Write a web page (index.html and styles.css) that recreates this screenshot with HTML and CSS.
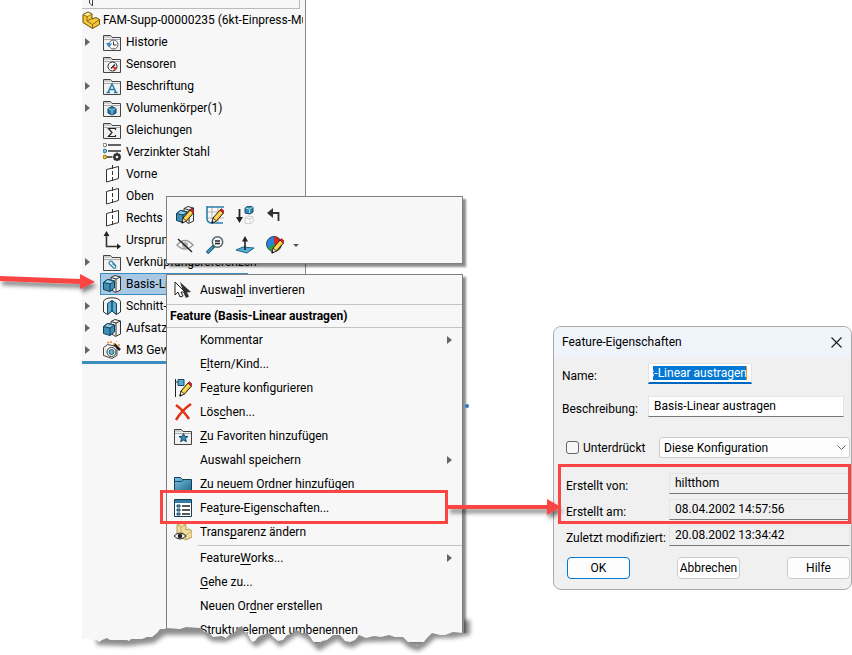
FILE: index.html
```
<!DOCTYPE html>
<html lang="de">
<head>
  <meta charset="utf-8">
  <title>Feature-Eigenschaften</title>
  <link rel="stylesheet" href="styles.css">
</head>
<body>
  <!-- shared icon shapes -->
  <svg class="defs" aria-hidden="true">
    <defs>
      <linearGradient id="blue" x1="0" y1="0" x2="1" y2="1">
        <stop offset="0" stop-color="#7cc4e4"/><stop offset="1" stop-color="#1f6487"/>
      </linearGradient>
      <symbol id="folder" viewBox="0 0 18 18">
        <path d="M.5 17.500V2.500h7l1.500 2h8.500v13z" fill="#f1f1f1" stroke="#444"/>
        <path d="M1 3h6l1.500 2H1z" fill="#ccc"/><path d="M1 6.500h16" stroke="#aaa"/>
      </symbol>
      <symbol id="pencil" viewBox="0 0 18 18">
        <path d="M6 17l1-5 7-8 3.500 3-7 8z" fill="#fbc52e" stroke="#222"/>
        <path d="M9 13l6-7" stroke="#fff0a0"/>
        <path d="M14 4l1.500-1.500 3 3L17 7z" fill="#d9202b" stroke="#8a1016" stroke-width=".6"/>
        <path d="M6 17l1-5 3.500 3z" fill="#f5dcb8" stroke="#222" stroke-width=".7"/><path d="M5.500 17.500l.5-2.500 2 1.500z" fill="#111"/>
      </symbol>
      <symbol id="plane" viewBox="0 0 18 18">
        <path d="M3.500 4.500L15.500 1.500v12L3.500 17z" fill="#fff" stroke="#333"/>
        <path d="M9.500 0v18" stroke="#333" stroke-dasharray="4 2"/>
      </symbol>
      <symbol id="extrude" viewBox="0 0 18 18">
        <path d="M8 2.500L12 .5l5.500 1.500v13l-5 2.500-4.500-3z" fill="#f3f3f3" stroke="#333"/>
        <path d="M8 2.500l5 1.500v13M13 4l4.500-2" fill="none" stroke="#333"/>
        <path d="M.5 7.500l4-3 7 1.500v7l-4.500 3.500-6.500-2z" fill="#3f8fb5" stroke="#123f58"/>
        <path d="M.5 7.500l4-3 7 1.500L7 9z" fill="#8ccbe6" stroke="#123f58"/><path d="M7 9v7.500" stroke="#123f58"/>
      </symbol>
    </defs>
  </svg>

  <main class="stage">
    <section class="tree-panel" aria-label="FeatureManager">
      <div class="filter-bar">
        <svg width="8" height="8" viewBox="0 0 8 8"><path d="M1.500 0v3l3 3V0" fill="#fff" stroke="#444"/></svg>
      </div>
      <div class="tree-root">
        <svg class="icon" viewBox="0 0 18 18"><path d="M1 3.500L6 1l4 2v5l4-1.500 3.500 2v5l-7 4L1 11.500z" fill="#f5c93b" stroke="#6b4d08"/><path d="M1 3.500l4 2L10 3M5 5.500V10l5.500 3.500v4M10.500 13.500l7-5M5 10l5-2.500" fill="none" stroke="#8a6610"/><path d="M2 3.500L6 1.700l3 1.500L5.500 5z" fill="#fff0a0"/></svg>
        <span>FAM-Supp-00000235 (6kt-Einpress-Mutter)</span>
      </div>
      <ul class="tree">
        <li class="branch"><svg class="icon" viewBox="0 0 18 18"><use href="#folder"/><circle cx="10.500" cy="11.500" r="4.500" fill="#fff" stroke="#555"/><path d="M10.500 8.500V12h3" fill="none" stroke="#333"/><path d="M3.500 10l2.500 4 2.500-3.500" fill="#318abd" stroke="#318abd"/></svg><span>Historie</span></li>
        <li><svg class="icon" viewBox="0 0 18 18"><use href="#folder"/><circle cx="9.500" cy="11.500" r="4.500" fill="#fff" stroke="#222"/><path d="M10 11.500l4 1-3 3.500z" fill="#e8331d"/><path d="M8 13.500l4-4" stroke="#222" stroke-width="1.500"/></svg><span>Sensoren</span></li>
        <li class="branch"><svg class="icon" viewBox="0 0 18 18"><use href="#folder"/><path d="M5 15.500L9 7l4 8.500M6.500 12.500h5M3.500 15.500H7M11 15.500h3.500" fill="none" stroke="#287da6" stroke-width="1.500"/></svg><span>Beschriftung</span></li>
        <li class="branch"><svg class="icon" viewBox="0 0 18 18"><use href="#folder"/><path d="M5 9.500l4-2 4 2V14l-4 2-4-2z" fill="#2b7ca4" stroke="#123f58"/><path d="M5.500 9.500L9 11l3.500-1.500M9 11v4.500" fill="none" stroke="#8ad0ee"/></svg><span>Volumenkörper(1)</span></li>
        <li><svg class="icon" viewBox="0 0 18 18"><use href="#folder"/><path d="M12.500 9V7.500h-7l3.500 4-3.500 4h7V14" fill="none" stroke="#222" stroke-width="1.200"/></svg><span>Gleichungen</span></li>
        <li><svg class="icon" viewBox="0 0 18 18"><path d="M5 2h13M5 8h13M4 14h5" stroke="#333" stroke-width="1.600"/><circle cx="1.800" cy="2" r="1.800" fill="#fff" stroke="#666"/><circle cx="1.800" cy="8" r="1.800" fill="#6fc4ee" stroke="#246b94"/><circle cx="1.800" cy="14" r="1.800" fill="#ffcb24" stroke="#8c6800"/><circle cx="14" cy="14" r="2.500" fill="none" stroke="#333" stroke-width="2.500"/><path d="M14 9.500v2M14 16.500v2M9.500 14h2M16.500 14h2M11 11l1 1M16 16l1 1M17 11l-1 1M11 17l1-1" stroke="#333" stroke-width="1.600"/></svg><span>Verzinkter Stahl</span></li>
        <li><svg class="icon" viewBox="0 0 18 18"><use href="#plane"/></svg><span>Vorne</span></li>
        <li><svg class="icon" viewBox="0 0 18 18"><use href="#plane"/></svg><span>Oben</span></li>
        <li><svg class="icon" viewBox="0 0 18 18"><use href="#plane"/></svg><span>Rechts</span></li>
        <li><svg class="icon" viewBox="0 0 18 18"><path d="M3.500 3v12.500h12" fill="none" stroke="#333" stroke-width="1.600"/><path d="M3.500 0L.5 5h6zM18 15.500l-4-3v6z" fill="#222"/></svg><span>Ursprung</span></li>
        <li class="branch"><svg class="icon" viewBox="0 0 18 18"><use href="#folder"/><path d="M13 13L9 8.500c-2-1-4 1-2.500 2.500l4 4c1.500 1 3-.5 2-2L9.500 10.500" fill="none" stroke="#2f83ad" stroke-width="1.200"/></svg><span>Verknüpfungsreferenzen</span></li>
        <li class="branch selected"><svg class="icon" viewBox="0 0 18 18"><use href="#extrude"/></svg><span>Basis-Linear austragen</span></li>
        <li class="branch"><svg class="icon" viewBox="0 0 18 18"><path d="M.5 4.500c1-5 16-5 17 0V15l-4 2.500L9 14l-4.500 3.500-4-2.500z" fill="#f4f4f4" stroke="#333"/><path d="M4.500 6.500L9 3.500V14l-4.500 3.500zM9 3.500l4.500 3v11L9 14z" fill="#5dadd0" stroke="#174b65"/></svg><span>Schnitt-Linear austragen</span></li>
        <li class="branch"><svg class="icon" viewBox="0 0 18 18"><use href="#extrude"/></svg><span>Aufsatz-Linear austragen</span></li>
        <li class="branch"><svg class="icon" viewBox="0 0 18 18"><path d="M.5 6.500l4-3L14 5.500v9l-5 3-8.500-3z" fill="#eee" stroke="#444"/><circle cx="8.500" cy="11" r="4.500" fill="#fff" stroke="#333"/><circle cx="8.500" cy="11" r="2.500" fill="#67b5d8" stroke="#1b587a"/><path d="M11 3l6 6" stroke="#222" stroke-width="2.500"/><path d="M4 1.500h2M8 0v2M10 3h2M16 3v2M13 0h1" stroke="#ed8b19" stroke-width="1.500"/></svg><span>M3 Gewinde</span></li>
      </ul>
    </section>

    <div class="toolbar" role="toolbar">
      <button type="button" aria-label="Feature bearbeiten"><svg class="icon" viewBox="0 0 18 18"><use href="#extrude"/><use href="#pencil"/></svg></button>
      <button type="button" aria-label="Skizze bearbeiten"><svg class="icon" viewBox="0 0 18 18"><path d="M6 0v18M12 0v18M0 6h18M0 12h18" stroke="#b5b5b5"/><path d="M1 0v12q0 5 5 5h11M1 1h17" fill="none" stroke="#2b80aa" stroke-width="1.600"/><use href="#pencil"/></svg></button>
      <button type="button" aria-label="Unterdrücken"><svg class="icon" viewBox="0 0 18 18"><path d="M3.500 3v9" stroke="#222" stroke-width="1.800"/><path d="M0 11h7l-3.500 6z" fill="#222"/><path d="M9 2l3-2 5 1v5l-3 2-5-1z" fill="#318bb4" stroke="#174b65"/><path d="M9.500 2l4 1 3.500-2M13.500 3v4" fill="none" stroke="#a4daf0"/><path d="M9 12l3-2 5 1v5l-3 2-5-1zM9 12l5 1 3-2M14 13v5" fill="#fff" stroke="#ccc"/></svg></button>
      <button type="button" aria-label="Zurück"><svg class="icon" viewBox="0 0 18 18"><path d="M4 7h8.500v8" fill="none" stroke="#333" stroke-width="1.800"/><path d="M7 2v10L1 7z" fill="#333"/></svg></button>
      <button type="button" class="row-start" aria-label="Ausblenden"><svg class="icon" viewBox="0 0 18 18"><path d="M1 9q8-9 16 0-8 8-16 0z" fill="#fff" stroke="#999" stroke-width="1.500"/><circle cx="9" cy="9" r="3" fill="#aaa"/><path d="M2 3l14 13" stroke="#222" stroke-width="1.400"/></svg></button>
      <button type="button" aria-label="Zoomen"><svg class="icon" viewBox="0 0 18 18"><path d="M1 17l7-7" stroke="#174b65" stroke-width="3.500"/><path d="M1.500 16.500l5.500-5.500" stroke="#3d9bc9" stroke-width="2"/><circle cx="11.500" cy="6" r="5.200" fill="#eef7fc" stroke="#566" stroke-width="1.500"/><path d="M9 5h5M9 7.500h5" stroke="#222" stroke-width="1.500"/></svg></button>
      <button type="button" aria-label="Normal auf"><svg class="icon" viewBox="0 0 18 18"><path d="M0 14l7-3 11 1-7 5z" fill="#55aed5" stroke="#1f6487"/><path d="M9 14V4" stroke="#222" stroke-width="1.600"/><path d="M9 0L6 5.500h6z" fill="#222"/></svg></button>
      <button type="button" aria-label="Erscheinungsbild"><svg class="icon" viewBox="0 0 18 18"><circle cx="8" cy="8" r="7.500" fill="#2684dc"/><path d="M8 8V.5A7.500 7.500 0 0 1 14.500 12z" fill="#df2421"/><path d="M8 8l6.500 4A7.500 7.500 0 0 1 2 12z" fill="#28a836"/><circle cx="8" cy="8" r="7.500" fill="none" stroke="#345"/><use href="#pencil"/></svg></button>
      <i class="drop"></i>
    </div>

    <nav class="menu" aria-label="Kontextmenü">
      <a href="#" class="item tall"><svg class="icon" viewBox="0 0 18 18"><path d="M6 1l11 10-4 .5 2 4-3 1.500-2-4z" fill="#333"/><path d="M1 1v13l3-3 2 5 3-1-2-4h4z" fill="#fff" stroke="#222"/></svg><span>Auswa<u>h</u>l invertieren</span></a>
      <h2>Feature (Basis-Linear austragen)</h2>
      <a href="#" class="item sub"><i class="icon"></i><span>Kommentar</span></a>
      <a href="#" class="item"><i class="icon"></i><span>E<u>l</u>tern/Kind...</span></a>
      <a href="#" class="item"><svg class="icon" viewBox="0 0 18 18"><path d="M1.500 0v18M1.500 3h3" stroke="#222"/><path d="M4 .5h6v6H4z" fill="#57a9ce" stroke="#174b65"/><use href="#pencil"/></svg><span>Fe<u>a</u>ture konfigurieren</span></a>
      <a href="#" class="item"><svg class="icon" viewBox="0 0 18 18"><path d="M2 2q7 5 13 14M17 1Q8 7 2 17" fill="none" stroke="#e03416" stroke-width="2.500"/></svg><span>Lös<u>c</u>hen...</span></a>
      <a href="#" class="item"><svg class="icon" viewBox="0 0 18 18"><use href="#folder"/><path d="M9.500 6.500l1.200 2.800 3.300.2-2.500 2 .8 3.200-2.800-1.700-2.800 1.700.8-3.200-2.500-2 3.300-.2z" fill="#318bb5" stroke="#174b65"/></svg><span><u>Z</u>u Favoriten hinzufügen</span></a>
      <a href="#" class="item sub"><i class="icon"></i><span>Auswahl speichern</span></a>
      <a href="#" class="item"><svg class="icon" viewBox="0 0 18 18"><path d="M.5 17.500v-15h6l2 2h9v13z" fill="url(#blue)" stroke="#123f58"/><path d="M1 6.500h7l2-2" fill="none" stroke="#164e6b"/></svg><span>Zu <u>n</u>euem Ordner hinzufügen</span></a>
      <a href="#" class="item"><svg class="icon" viewBox="0 0 18 18"><path d="M.5.500h17v17H.5z" fill="#fff" stroke="#173b50"/><path d="M1 1h16v3H1z" fill="#2f7ea5"/><path d="M8 7h8M8 11h8M8 15h8" stroke="#222" stroke-width="1.300"/><path d="M3 6h3v2H3zM3 10h3v2H3zM3 14h3v2H3z" fill="#55add4" stroke="#174b65"/></svg><span>Fea<u>t</u>ure-Eigenschaften...</span></a>
      <a href="#" class="item"><svg class="icon" viewBox="0 0 18 18"><path d="M3 2l5-2 4 2v5l3-1 3 2v6l-6 3-9-5z" fill="#f2dc9d" stroke="#b49b58"/><path d="M3 2l4 2 5-2M7 4v5l5 3v4M12 12l6-4" fill="none" stroke="#c7ad66"/><path d="M0 13q6-6 12 0-6 6-12 0z" fill="#fff" stroke="#222"/><circle cx="6" cy="13" r="2.300" fill="#222"/></svg><span>Trans<u>p</u>arenz ändern</span></a>
      <hr>
      <a href="#" class="item sub"><i class="icon"></i><span>Feature<u>W</u>orks...</span></a>
      <a href="#" class="item"><i class="icon"></i><span><u>G</u>ehe zu...</span></a>
      <a href="#" class="item"><i class="icon"></i><span>Neuen Or<u>d</u>ner erstellen</span></a>
      <a href="#" class="item"><i class="icon"></i><span>Strukturelement <u>u</u>mbenennen</span></a>
    </nav>

    <form class="dialog">
      <header>
        <h1>Feature-Eigenschaften</h1>
        <button type="button" class="close" aria-label="Schließen"><svg width="11" height="11" viewBox="0 0 11 11"><path d="M.5.500l10 10M10.500.500l-10 10" stroke="#222" stroke-width="1.200"/></svg></button>
      </header>
      <div class="field">
        <label for="name">Name:</label>
        <input id="name" class="editing" type="text" value="Basis-Linear austragen">
      </div>
      <div class="field">
        <label for="desc">Beschreibung:</label>
        <input id="desc" type="text" value="Basis-Linear austragen">
      </div>
      <div class="suppress">
        <input id="suppressed" type="checkbox">
        <label for="suppressed">Unterdrückt</label>
        <div class="select">
          <select aria-label="Konfiguration"><option>Diese Konfiguration</option></select>
          <svg width="9" height="6" viewBox="0 0 9 6"><path d="M.5.500l4 4 4-4" fill="none" stroke="#666"/></svg>
        </div>
      </div>
      <div class="info">
        <label for="creator">Erstellt von:</label>
        <input id="creator" type="text" value="hiltthom" readonly>
        <label for="created">Erstellt am:</label>
        <input id="created" type="text" value="08.04.2002 14:57:56" readonly>
        <label for="modified">Zuletzt modifiziert:</label>
        <input id="modified" type="text" value="20.08.2002 13:34:42" readonly>
      </div>
      <div class="buttons">
        <button type="submit" class="primary">OK</button>
        <button type="button">Abbrechen</button>
        <button type="button">Hilfe</button>
      </div>
    </form>

    <!-- torn edge and red callouts -->
    <svg class="overlay" aria-hidden="true">
      <defs>
        <filter id="soft" x="-10%" y="-50%" width="120%" height="200%"><feGaussianBlur stdDeviation="2"/></filter>
        <filter id="drop" x="-10%" y="-100%" width="120%" height="400%"><feDropShadow dx="2" dy="4" stdDeviation="2" flood-opacity=".5"/></filter>
        <path id="tear" d="M80 639L88 638 91 640 97 640 99 642 102 640 107 638 110 640 127 640 129 641 131 639 142 639 147 637 152 637 157 633 160 629 164 629 167 628 180 629 186 627 200 628 205 632 209 633 213 637 222 636 226 638 230 634 234 633 238 628 242 626 244 632 247 633 252 642 255 641 258 637 262 635 270 633 273 637 278 641 283 640 287 635 291 634 297 630 301 633 307 633 311 638 314 643 317 645 322 641 327 640 333 635 340 635 345 641 350 642 355 640 359 635 366 638 374 636 381 637 389 635 395 637 403 637 409 643 417 646 423 643 427 638 432 633 440 635 445 635 453 632 464 633 480 632V670H80z"/>
        <clipPath id="below"><use href="#tear"/><path d="M464 612h16v30h-16z"/></clipPath>
      </defs>
      <use href="#tear" fill="#fff"/>
      <g clip-path="url(#below)">
        <path d="M94 620H470V635L453 638 435 638 425 647 418 651 409 648 401 641 363 642 352 648 345 646 338 640 330 644 319 651 311 643 305 638 297 635 290 640 280 647 270 638 256 647 250 642 245 634 225 642 212 641 204 635 165 635 154 643 128 646 97 645z" fill="#333" opacity=".55" filter="url(#soft)"/>
      </g>
      <circle cx="467" cy="406" r="2" fill="#287bc5"/>
      <g fill="#fb4444" filter="url(#drop)">
        <path d="M0 276l80 3v-5l15 8-15 7v-5l-80-3z"/>
        <path d="M448 505h99v-6l14 8-14 8v-6h-99z"/>
      </g>
      <path d="M161.500 491.500h285v31h-285zM559.500 465.500h290v57h-290z" fill="none" stroke="#fb4444" stroke-width="3"/>
    </svg>
  </main>
  <script>
    // keep the end of the name in view
    const nameInput = document.getElementById('name');
    nameInput.scrollLeft = nameInput.scrollWidth;
  </script>
</body>
</html>
```
FILE: styles.css
```
* { box-sizing: border-box; }
body {
  margin: 0;
  background: #fff;
  color: #000;
  font: 12px/16px Roboto, "Open Sans", sans-serif;
}
button, input, select { font: inherit; color: inherit; }
.defs { position: absolute; width: 0; height: 0; }
.icon { width: 18px; height: 18px; flex: none; display: block; }

.stage {
  position: relative;
  min-height: 100vh;
  overflow: hidden;
}

/* feature tree */
.tree-panel {
  width: 224px;
  min-height: 100vh;
  margin-left: 82px;
  background: #f7f7f7;
  border-right: 1px solid #888;
}
.filter-bar {
  height: 9px;
  margin-right: 5px;
  padding-left: 6px;
  border: solid #bbb;
  border-width: 0 1px 1px 0;
}
.filter-bar svg { display: block; }
.tree-root {
  display: flex;
  align-items: center;
  gap: 3px;
  height: 22px;
  margin-right: 2px;
  overflow: hidden;
  white-space: nowrap;
}
.tree {
  list-style: none;
  margin: 0;
  padding: 0;
  border-bottom: 3px solid #3c8cc0;
}
.tree li {
  display: flex;
  align-items: center;
  gap: 5px;
  height: 22px;
  margin-left: 18px;
  padding-left: 3px;
  white-space: nowrap;
}
.branch::before {
  content: "";
  width: 0;
  margin-left: -18px;
  margin-right: 8px;
  border: solid transparent;
  border-width: 4px 0 4px 5px;
  border-left-color: #666;
}
.tree .selected {
  width: 148px;
  overflow: hidden;
  background: #a8c8e4;
  border: 1px solid #3c8cc0;
  padding-left: 2px;
}

/* popups */
.toolbar, .menu {
  position: absolute;
  left: 166px;
  width: 297px;
  background: #f7f7f7;
  border: 1px solid #808080;
  box-shadow: 3px 3px 2px rgba(0, 0, 0, 0.45);
}
.toolbar {
  top: 196px;
  display: grid;
  grid-template-columns: repeat(4, 30px) 20px;
  grid-auto-rows: 30px;
  padding: 3px;
}
.toolbar button {
  display: grid;
  place-items: center;
  padding: 0;
  border: 0;
  background: none;
}
.row-start { grid-column: 1; }
.drop {
  align-self: center;
  margin-left: 3px;
  width: 0;
  border: solid transparent;
  border-width: 3px 3px 0;
  border-top-color: #555;
}
.menu { top: 274px; }
.item {
  display: flex;
  align-items: center;
  gap: 8px;
  height: 24px;
  padding: 0 10px 0 7px;
  color: inherit;
  text-decoration: none;
}
.item u { text-underline-offset: 2px; }
.tall { height: 29px; }
.sub::after {
  content: "";
  margin-left: auto;
  border: solid transparent;
  border-width: 4px 0 4px 5px;
  border-left-color: #666;
}
.menu h2 {
  margin: 0;
  height: 24px;
  padding-left: 3px;
  border: solid #c4c4c4;
  border-width: 1px 0;
  font-size: 12px;
  line-height: 22px;
}
.menu hr {
  margin: 1px 0 0 31px;
  border: 0;
  border-top: 1px solid #c4c4c4;
}

/* dialog */
.dialog {
  position: absolute;
  left: 553px;
  top: 326px;
  width: 299px;
  padding-bottom: 10px;
  background: #f0f0f0;
  border: 1px solid #aaa;
  border-radius: 8px;
  overflow: hidden;
}
.dialog header {
  display: flex;
  align-items: center;
  justify-content: space-between;
  height: 30px;
  padding: 0 9px 0 8px;
  background: #eff3fa;
}
.dialog h1 { margin: 0; font-size: 12px; font-weight: normal; }
.close { display: flex; padding: 0; border: 0; background: none; }
.dialog input[type="text"] {
  width: 100%;
  min-width: 0;
  height: 21px;
  padding: 0 5px 2px;
  border: 1px solid #e4e4e4;
  border-bottom-color: #777;
  background: #fff;
}
.field {
  display: grid;
  grid-template-columns: 86px 1fr;
  align-items: end;
  margin-top: 12px;
  padding: 0 7px 0 8px;
}
.dialog header + .field { margin-top: 6px; }
.dialog input.editing {
  width: 104px;
  padding: 2px 4px;
  border-bottom: 2px solid #0067c0;
  background: linear-gradient(90deg, #0078d4 93px, #f08a28 93px) content-box, #fff;
  color: #fff;
}
.suppress {
  display: flex;
  align-items: center;
  margin-top: 20px;
  padding: 0 1px 0 12px;
}
.suppress input {
  appearance: none;
  width: 13px;
  height: 13px;
  margin: 0 4px 0 0;
  border: 1px solid #666;
  border-radius: 3px;
  background: #f6f6f6;
}
.select {
  position: relative;
  width: 191px;
  margin-left: auto;
}
.select select {
  appearance: none;
  display: block;
  width: 100%;
  height: 21px;
  padding: 0 4px;
  border: 1px solid #ccc;
  border-radius: 3px;
  background: #fdfdfd;
}
.select svg {
  position: absolute;
  right: 4px;
  top: 8px;
  pointer-events: none;
}
.info {
  display: grid;
  grid-template-columns: 103px 1fr;
  align-items: end;
  row-gap: 5px;
  margin-top: 15px;
  padding: 0 1px 0 12px;
  white-space: nowrap;
}
.dialog .info input { background: #f0f0f0; }
.buttons {
  display: flex;
  justify-content: space-between;
  margin-top: 11px;
  padding: 0 1px 0 13px;
}
.buttons button {
  width: 63px;
  height: 22px;
  padding: 0;
  border: 1px solid #ccc;
  border-radius: 4px;
  background: #fdfdfd;
}
.buttons .primary { border-color: #0078d4; }

.overlay {
  position: absolute;
  inset: 0;
  width: 100%;
  height: 100%;
  pointer-events: none;
}
```
